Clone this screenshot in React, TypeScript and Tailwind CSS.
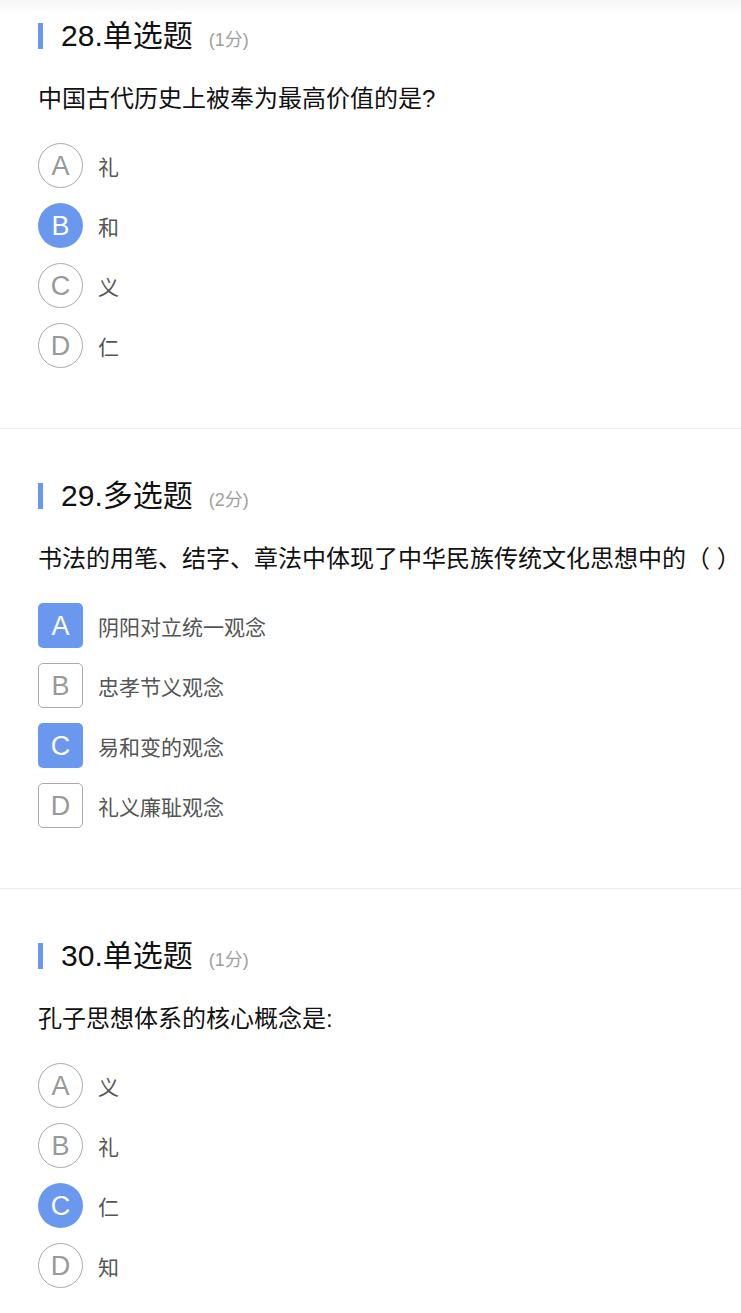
type Option = { key: string; text: string; checked?: boolean };
type Question = { no: number; kind: string; score: number; multi: boolean; stem: string; options: Option[] };

const questions: Question[] = [
  {
    no: 28,
    kind: '单选题',
    score: 1,
    multi: false,
    stem: '中国古代历史上被奉为最高价值的是?',
    options: [
      { key: 'A', text: '礼' },
      { key: 'B', text: '和', checked: true },
      { key: 'C', text: '义' },
      { key: 'D', text: '仁' },
    ],
  },
  {
    no: 29,
    kind: '多选题',
    score: 2,
    multi: true,
    stem: '书法的用笔、结字、章法中体现了中华民族传统文化思想中的（ ）',
    options: [
      { key: 'A', text: '阴阳对立统一观念', checked: true },
      { key: 'B', text: '忠孝节义观念' },
      { key: 'C', text: '易和变的观念', checked: true },
      { key: 'D', text: '礼义廉耻观念' },
    ],
  },
  {
    no: 30,
    kind: '单选题',
    score: 1,
    multi: false,
    stem: '孔子思想体系的核心概念是:',
    options: [
      { key: 'A', text: '义' },
      { key: 'B', text: '礼' },
      { key: 'C', text: '仁', checked: true },
      { key: 'D', text: '知' },
    ],
  },
];

function OptionRow({ opt, multi }: { opt: Option; multi: boolean }) {
  const shape = multi ? 'rounded-[5px]' : 'rounded-full';
  const look = opt.checked
    ? 'bg-[#6b98ef] text-white'
    : 'border border-[#aaaaaa] text-[#999999]';
  return (
    <div className="flex items-center h-[45px]">
      <div className={`w-[45px] h-[45px] shrink-0 flex items-center justify-center pt-[2px] text-[27px] leading-none ${shape} ${look}`}>
        {opt.key}
      </div>
      <span className="ml-[15px] pt-[4px] text-[21px] text-[#555555] leading-none">{opt.text}</span>
    </div>
  );
}

function QuestionBlock({ q, first }: { q: Question; first: boolean }) {
  return (
    <section
      className={`pl-[38px] pb-[60px] ${
        first ? 'pt-[22px] bg-[linear-gradient(#f7f7f7,#ffffff_14px)]' : 'pt-[53px] border-t border-[#eeeeee]'
      }`}
    >
      <div className="flex items-center h-[27px]">
        <div className="w-[5px] h-[26px] bg-[#6b98ef]" />
        <div className="ml-[18px] flex items-baseline">
          <span className="text-[30px] leading-none text-[#111111]">
            {q.no}.{q.kind}
          </span>
          <span className="ml-[16px] text-[18px] leading-none text-[#a0a0a0]">({q.score}分)</span>
        </div>
      </div>
      <p className="mt-[32px] text-[24px] leading-[36px] text-[#111111] whitespace-nowrap">{q.stem}</p>
      <div className="mt-[26px] flex flex-col gap-[15px]">
        {q.options.map((o) => (
          <OptionRow key={o.key} opt={o} multi={q.multi} />
        ))}
      </div>
    </section>
  );
}

export default function App() {
  return (
    <div
      className="w-[741px] min-h-[1313px] bg-white overflow-hidden"
      style={{ fontFamily: '"Liberation Sans", "Noto Sans CJK SC", sans-serif' }}
    >
      {questions.map((q, i) => (
        <QuestionBlock key={q.no} q={q} first={i === 0} />
      ))}
    </div>
  );
}
